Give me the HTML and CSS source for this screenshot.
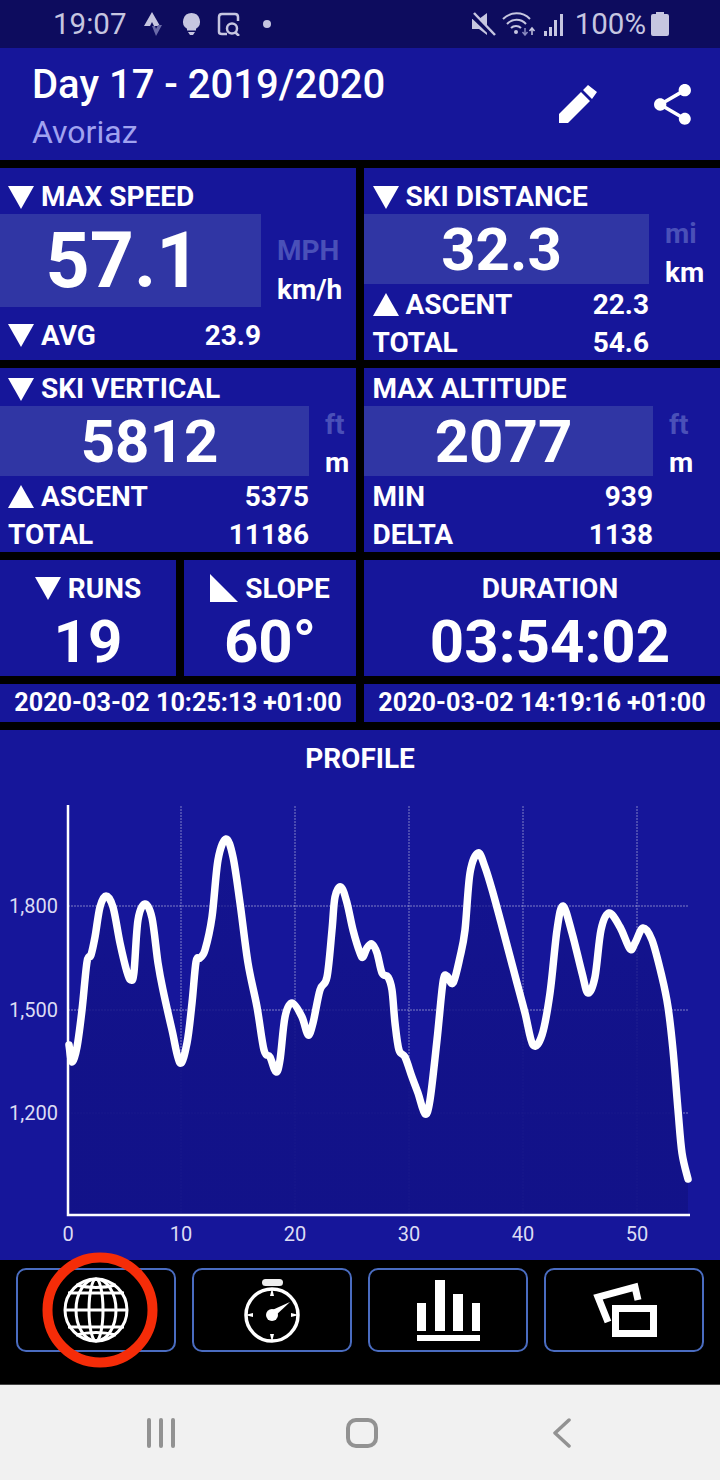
FILE: index.html
```html
<!DOCTYPE html>
<html>
<head>
    <meta charset="UTF-8" />
    <title>Day 17 - 2019/2020</title>
    <link rel="stylesheet" href="styles.css">
</head>
<body>
    <div class="statusbar">
        <span class="clock">19:07</span>
        <svg class="st-left" viewBox="144 12 127 24">
            <path d="M152 12l-8 14h6l2-4 2 4h6z" fill="#c6c6e0"/>
            <path d="M152 26l4 10 6-11h-4l-2 4-1-3z" fill="#6a6aa8"/>
            <path d="M191.500 13a8.500 8.500 0 0 0-4.500 15.700v1.800h9v-1.800a8.500 8.500 0 0 0-4.500-15.700zM188 32h7l-2 3h-3z" fill="#c6c6e0"/>
            <path d="M227 34h-5q-3 0-3-2V17q0-3 3-3h13q3 0 3 3v4M232 33.500a5 5 0 1 1 0-10 5 5 0 0 1 0 10zM235 32l4 4" fill="none" stroke="#c6c6e0" stroke-width="2.500"/>
            <circle cx="267" cy="24" r="4" fill="#c6c6e0"/>
        </svg>
        <div class="st-right">
            <svg class="st-icons" viewBox="472 12 93 24">
                <path d="M472 19h7l8-6v22l-8-6h-7z" fill="#c6c6e0"/>
                <path d="M472 15l22 21" stroke="#0d0c5e" stroke-width="5"/>
                <path d="M474 13l21 22" stroke="#c6c6e0" stroke-width="2.500"/>
                <path d="M503 19a19 19 0 0 1 27 0M507 24a13 13 0 0 1 19 0M511 28a7 7 0 0 1 10 0" fill="none" stroke="#c6c6e0" stroke-width="2"/>
                <circle cx="516" cy="32" r="2" fill="#c6c6e0"/>
                <path d="M525 28v7M522.500 32l2.500 3 2.500-3" fill="none" stroke="#8a8ac0" stroke-width="1.500"/>
                <path d="M532 35v-7M529.500 31l2.500-3 2.500 3" fill="none" stroke="#c6c6e0" stroke-width="1.500"/>
                <path d="M544 31h3v5h-3zM549 27h3v9h-3zM554 20h3v16h-3zM560 14h3v22h-3z" fill="#c6c6e0"/>
            </svg>
            <span class="battery-pct">100%</span>
            <svg class="st-battery" viewBox="0 0 18 24">
                <path d="M5 0h8v2h3q2 0 2 2v18q0 2-2 2H2q-2 0-2-2V4q0-2 2-2h3z" fill="#c6c6e0"/>
            </svg>
        </div>
    </div>

    <div class="header">
        <div class="header-text">
            <h1>Day 17 - 2019/2020</h1>
            <p>Avoriaz</p>
        </div>
        <svg class="ic-edit" viewBox="0 0 38 38">
            <path d="M0 38V29L22 7l9 9L9 38zM24 5l5-5 9 7-5 7z" fill="#fff"/>
        </svg>
        <svg class="ic-share" viewBox="3 2 18 20">
            <path d="M18 16.080c-.76 0-1.440.3-1.960.77L8.910 12.700c.05-.23.09-.46.09-.7s-.04-.47-.09-.7l7.050-4.110c.54.5 1.250.81 2.040.81 1.660 0 3-1.340 3-3s-1.340-3-3-3-3 1.340-3 3c0 .24.04.47.09.7L8.040 9.810C7.500 9.310 6.790 9 6 9c-1.660 0-3 1.340-3 3s1.340 3 3 3c.79 0 1.500-.31 2.040-.81l7.120 4.160c-.05.21-.08.43-.08.65 0 1.610 1.310 2.920 2.920 2.920 1.610 0 2.920-1.310 2.920-2.920s-1.310-2.920-2.920-2.920z" fill="#fff"/>
        </svg>
    </div>

    <div class="stats">
        <div class="card">
            <div class="card-title"><i class="tri-down"></i>MAX SPEED</div>
            <div class="card-main">
                <div class="big big-speed">57.1</div>
                <div class="units units-low"><span class="dim">MPH</span><span>km/h</span></div>
            </div>
            <div class="card-row row-speed"><span><i class="tri-down"></i>AVG</span><span>23.9</span></div>
        </div>

        <div class="card card-right">
            <div class="card-title"><i class="tri-down"></i>SKI DISTANCE</div>
            <div class="card-main">
                <div class="big big-dist">32.3</div>
                <div class="units"><span class="dim">mi</span><span>km</span></div>
            </div>
            <div class="card-row row-dist"><span><i class="tri-up"></i>ASCENT</span><span>22.3</span></div>
            <div class="card-row row-dist"><span>TOTAL</span><span>54.6</span></div>
        </div>

        <div class="card card-short">
            <div class="card-title"><i class="tri-down"></i>SKI VERTICAL</div>
            <div class="card-main">
                <div class="big big-vert">5812</div>
                <div class="units units-tight"><span class="dim">ft</span><span>m</span></div>
            </div>
            <div class="card-row row-vert"><span><i class="tri-up"></i>ASCENT</span><span>5375</span></div>
            <div class="card-row row-vert"><span>TOTAL</span><span>11186</span></div>
        </div>

        <div class="card card-short card-right">
            <div class="card-title">MAX ALTITUDE</div>
            <div class="card-main">
                <div class="big big-alt">2077</div>
                <div class="units units-tight"><span class="dim">ft</span><span>m</span></div>
            </div>
            <div class="card-row row-alt"><span>MIN</span><span>939</span></div>
            <div class="card-row row-alt"><span>DELTA</span><span>1138</span></div>
        </div>

        <div class="pair">
            <div class="card tile">
                <div class="tile-title"><i class="tri-down"></i>RUNS</div>
                <div class="tile-value">19</div>
            </div>
            <div class="card tile">
                <div class="tile-title"><i class="tri-slope"></i>SLOPE</div>
                <div class="tile-value">60°</div>
            </div>
        </div>
        <div class="card tile tile-wide">
            <div class="tile-title">DURATION</div>
            <div class="tile-value">03:54:02</div>
        </div>

        <div class="card stamp">2020-03-02 10:25:13 +01:00</div>
        <div class="card stamp">2020-03-02 14:19:16 +01:00</div>
    </div>

    <div class="chart">
        <svg class="chart-svg" viewBox="0 730 720 530">
            <defs>
                <linearGradient id="areafill" x1="0" y1="0" x2="0" y2="1">
                    <stop offset="0" stop-color="#121288" stop-opacity=".55"/>
                    <stop offset=".6" stop-color="#121288" stop-opacity=".95"/>
                </linearGradient>
            </defs>
            <text class="chart-title" x="360" y="768">PROFILE</text>
            <g class="grid">
                <path d="M181 806V1214M295 806V1214M409 806V1214M523 806V1214M637 806V1214"/>
                <path d="M68 906H689M68 1010H689M68 1113H689"/>
            </g>
            <path id="area" fill="url(#areafill)"/>
            <path class="axis" d="M68 805V1215H690"/>
            <path id="line" class="line"/>
            <g class="lab-y">
                <text x="58" y="913">1,800</text>
                <text x="58" y="1017">1,500</text>
                <text x="58" y="1120">1,200</text>
            </g>
            <g class="lab-x">
                <text x="68" y="1241">0</text>
                <text x="181" y="1241">10</text>
                <text x="295" y="1241">20</text>
                <text x="409" y="1241">30</text>
                <text x="523" y="1241">40</text>
                <text x="637" y="1241">50</text>
            </g>
        </svg>
    </div>

    <div class="tabs">
        <div class="tab">
            <svg class="tab-icon" viewBox="0 0 160 84">
                <g fill="none" stroke="#fff" stroke-width="3">
                    <circle cx="80" cy="42" r="31"/>
                    <ellipse cx="80" cy="42" rx="7" ry="31"/>
                    <ellipse cx="80" cy="42" rx="20" ry="31"/>
                    <path d="M49 42h62M52 25h56M52 59h56M60 17q20 5 40 0M60 67q20-5 40 0"/>
                </g>
            </svg>
            <svg class="ring" viewBox="0 0 116 116">
                <circle cx="58" cy="58" r="52.500" fill="none" stroke="#f52c08" stroke-width="10"/>
            </svg>
        </div>
        <div class="tab">
            <svg class="tab-icon" viewBox="0 0 160 84">
                <rect x="70" y="11" width="21" height="7" rx="3.500" fill="#eee"/>
                <circle cx="80" cy="47" r="26" fill="none" stroke="#fff" stroke-width="3.500"/>
                <path d="M80 20l-2 8h4zM80 74l-2-8h4zM53 47l8-2v4zM107 47l-8-2v4z" fill="#fff"/>
                <circle cx="80" cy="47" r="6" fill="#fff"/>
                <path d="M78 43l20-9-16 15z" fill="#fff"/>
            </svg>
        </div>
        <div class="tab">
            <svg class="tab-icon" viewBox="0 0 160 84">
                <path d="M49 35h9v28h-9zM67 12h10v51H67zM85 26h10v37H85zM104 35h8v28h-8zM49 67h63v6H49z" fill="#fff"/>
            </svg>
        </div>
        <div class="tab">
            <svg class="tab-icon" viewBox="0 0 160 84">
                <rect x="71.500" y="40.500" width="38" height="25" fill="none" stroke="#fff" stroke-width="7"/>
                <path d="M64 54L54 29 91 19l3 13" fill="none" stroke="#fff" stroke-width="7"/>
            </svg>
        </div>
    </div>

    <div class="navbar">
        <svg class="nav-icon" viewBox="0 0 30 30">
            <path d="M3 2v26M15 2v26M27 2v26" stroke="#929292" stroke-width="4" stroke-linecap="round"/>
        </svg>
        <svg class="nav-icon nav-home" viewBox="0 0 32 30">
            <rect x="2" y="2" width="28" height="26" rx="8" fill="none" stroke="#929292" stroke-width="4"/>
        </svg>
        <svg class="nav-icon" viewBox="0 0 18 30">
            <path d="M16 2L2 15l14 13" fill="none" stroke="#929292" stroke-width="3.500" stroke-linecap="round" stroke-linejoin="round"/>
        </svg>
    </div>

    <script src="chart.js"></script>
</body>
</html>
```

FILE: styles.css
```css
* {
    box-sizing: border-box;
}
body {
    margin: 0;
    width: 720px;
    height: 1480px;
    overflow: hidden;
    background: #000;
    font-family: Roboto, "Liberation Sans", sans-serif;
    color: #fff;
}

/* status bar */
.statusbar {
    height: 48px;
    background: #0d0c5e;
    color: #c6c6e0;
    display: flex;
    align-items: center;
    padding: 0 51px 0 53px;
    font-size: 29.500px;
}
.clock {
    width: 91px;
}
.st-left {
    width: 127px;
    height: 24px;
}
.st-right {
    margin-left: auto;
    display: flex;
    align-items: center;
}
.st-icons {
    width: 93px;
    height: 24px;
    margin-right: 10px;
}
.st-battery {
    width: 18px;
    height: 24px;
    margin-left: 5px;
}

/* header */
.header {
    height: 112px;
    background: #16169a;
    display: flex;
    align-items: center;
    padding-left: 32px;
}
.header-text {
    flex: 1;
    padding-top: 4px;
}
h1 {
    margin: 0;
    font-size: 40px;
    line-height: 46px;
    font-weight: 500;
}
.header p {
    margin: 6px 0 0;
    font-size: 32px;
    line-height: 36px;
    color: #a0a2f0;
}
.ic-edit {
    width: 38px;
    height: 38px;
    margin: 0 57px 0 0;
}
.ic-share {
    width: 37px;
    height: 41px;
    margin-right: 29px;
}

/* stat cards */
.stats {
    margin-top: 8px;
    display: grid;
    grid-template-columns: 356px 356px;
    grid-template-rows: 192px 184px 116px 38px;
    gap: 8px;
}
.card {
    background: #16169a;
    font-weight: 700;
    font-size: 28px;
}
.card-title {
    height: 46px;
    padding: 12px 0 0 8px;
    line-height: 38px;
    display: flex;
    align-items: center;
}
.card-short .card-title {
    height: 38px;
    padding-top: 4px;
}
.card-right .card-title,
.card-right .card-row {
    padding-left: 8.500px;
}
.card-main {
    display: flex;
}
.big {
    height: 70px;
    background: #3036a4;
    font-size: 60px;
    font-weight: 700;
    display: flex;
    align-items: center;
    justify-content: center;
    padding-right: 10px;
}
.big-speed {
    width: 261px;
    height: 93px;
    font-size: 77px;
    padding-right: 15px;
}
.big-dist {
    width: 285px;
}
.big-vert {
    width: 309px;
}
.big-alt {
    width: 289px;
}
.units {
    display: flex;
    flex-direction: column;
    line-height: 39px;
    padding-left: 16px;
    height: 70px;
}
.units-low {
    padding-top: 17px;
}
.units-tight {
    line-height: 38px;
}
.dim {
    color: #4a50b8;
}
.card-row {
    height: 38px;
    padding: 3px 0 0 8px;
    display: flex;
    justify-content: space-between;
    align-items: center;
}
.card-row span {
    display: flex;
    align-items: center;
}
.row-speed {
    width: 261px;
    height: 53px;
}
.row-dist {
    width: 285px;
}
.row-vert {
    width: 309px;
}
.row-alt {
    width: 289px;
}
.tri-down,
.tri-up {
    width: 0;
    height: 0;
    border-left: 13.500px solid transparent;
    border-right: 13.500px solid transparent;
    margin-right: 7px;
}
.tri-down {
    border-top: 23px solid #fff;
}
.tri-up {
    border-bottom: 23px solid #fff;
}
.tri-slope {
    width: 0;
    height: 0;
    border-left: 28px solid #fff;
    border-top: 28px solid transparent;
    margin-right: 7px;
}

/* tiles */
.pair {
    display: grid;
    grid-template-columns: 176px 172px;
    gap: 8px;
}
.tile {
    text-align: center;
}
.tile-wide {
    padding-left: 16px;
}
.tile-title {
    height: 54px;
    padding-top: 2px;
    display: flex;
    align-items: center;
    justify-content: center;
}
.tile-value {
    font-size: 60px;
    line-height: 56px;
    font-weight: 700;
}
.stamp {
    font-size: 25.200px;
    line-height: 38px;
    text-align: center;
}

/* chart */
.chart {
    margin-top: 8px;
    height: 530px;
    background: #16169a;
}
.chart-svg {
    display: block;
    width: 720px;
    height: 530px;
}
.chart-title {
    font-size: 28px;
    font-weight: 700;
    text-anchor: middle;
    fill: #fff;
}
.grid path {
    fill: none;
    stroke: #fff;
    stroke-opacity: .45;
    stroke-width: 1;
    stroke-dasharray: 2 1;
}
.axis {
    fill: none;
    stroke: #fff;
    stroke-width: 2.500;
}
.line {
    fill: none;
    stroke: #fff;
    stroke-width: 7.500;
    stroke-linejoin: round;
    stroke-linecap: round;
}
.lab-y text,
.lab-x text {
    font-size: 20px;
    fill: #dcdcf4;
}
.lab-y text {
    text-anchor: end;
}
.lab-x text {
    text-anchor: middle;
}

/* bottom buttons */
.tabs {
    height: 124px;
    padding: 8px 16px 0;
    display: grid;
    grid-template-columns: repeat(4, 160px);
    grid-auto-rows: 84px;
    gap: 16px;
}
.tab {
    position: relative;
    border: 2px solid #4a6cc0;
    border-radius: 10px;
}
.tab-icon {
    display: block;
    width: 160px;
    height: 84px;
    margin: -2px;
}
.ring {
    position: absolute;
    left: 24px;
    top: -18px;
    width: 116px;
    height: 116px;
}

/* android nav */
.navbar {
    height: 96px;
    background: #f1f1f1;
    border-top: 1px solid #444;
    display: flex;
    align-items: center;
    padding: 0 149px 0 146px;
    justify-content: space-between;
}
.nav-icon {
    height: 30px;
    width: auto;
}
.nav-home {
    margin-right: 6px;
}
```

FILE: chart.js
```js
const points = [
    [69, 1045], [72, 1062], [77, 1047], [82, 1010], [87, 962], [91, 955], [95, 937], [100, 907],
    [106, 896], [113, 907], [120, 943], [127, 972], [131, 980], [134, 972], [138, 920], [145, 904],
    [152, 918], [158, 963], [163, 990], [172, 1030], [180, 1063], [187, 1043], [192, 1003], [196, 962],
    [200, 958], [205, 950], [212, 917], [218, 860], [226, 839], [233, 857], [240, 903], [248, 963],
    [257, 1007], [264, 1050], [270, 1057], [276, 1072], [280, 1060], [285, 1017], [292, 1003], [302, 1017],
    [308, 1035], [313, 1023], [320, 990], [327, 977], [332, 930], [335, 897], [341, 887], [347, 903],
    [353, 930], [360, 953], [363, 957], [367, 948], [372, 944], [377, 953], [382, 973], [388, 977],
    [392, 990], [395, 1023], [399, 1050], [405, 1057], [412, 1077], [418, 1093], [425, 1114], [430, 1100],
    [437, 1040], [443, 982], [447, 976], [453, 983], [460, 957], [465, 930], [470, 873], [478, 853],
    [485, 867], [493, 893], [503, 930], [517, 983], [525, 1013], [533, 1045], [542, 1035], [550, 993],
    [557, 930], [563, 906], [572, 933], [582, 973], [588, 993], [595, 977], [601, 930], [609, 913],
    [620, 927], [630, 949], [635, 943], [643, 928], [652, 940], [662, 977], [668, 1007], [673, 1050],
    [678, 1110], [682, 1153], [688, 1179]
];

// catmull-rom through the points
let d = 'M' + points[0].join(' ');
for (let i = 0; i < points.length - 1; i++) {
    const p0 = points[Math.max(i - 1, 0)];
    const p1 = points[i];
    const p2 = points[i + 1];
    const p3 = points[Math.min(i + 2, points.length - 1)];
    const c1 = [p1[0] + (p2[0] - p0[0]) / 6, p1[1] + (p2[1] - p0[1]) / 6];
    const c2 = [p2[0] - (p3[0] - p1[0]) / 6, p2[1] - (p3[1] - p1[1]) / 6];
    d += ' C' + c1.join(' ') + ' ' + c2.join(' ') + ' ' + p2.join(' ');
}
document.getElementById('line').setAttribute('d', d);
document.getElementById('area').setAttribute('d', d + ' V1215 H69 Z');
```
